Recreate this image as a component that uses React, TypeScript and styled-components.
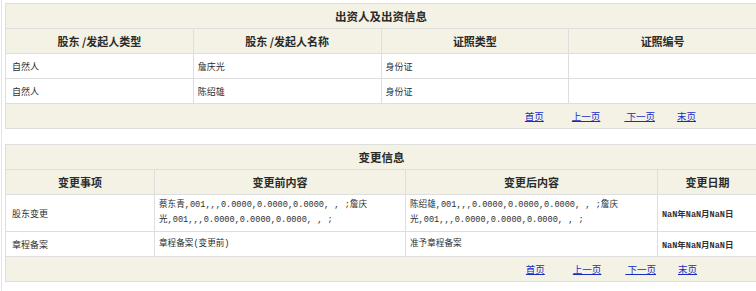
import React from "react";
import styled, { createGlobalStyle } from "styled-components";

const GlobalStyle = createGlobalStyle`
  html, body {
    margin: 0;
    padding: 0;
    overflow: hidden;
    background: #ffffff;
  }
`;

const CJK = `"Noto Sans CJK SC", "Noto Sans", sans-serif`;

const partners = [
  { type: "自然人", name: "詹庆光", cert: "身份证", no: "" },
  { type: "自然人", name: "陈绍雄", cert: "身份证", no: "" },
];

const changes = [
  {
    item: "股东变更",
    before: ["蔡东青,001,,,0.0000,0.0000,0.0000, , ;詹庆", "光,001,,,0.0000,0.0000,0.0000, , ;"],
    after: ["陈绍雄,001,,,0.0000,0.0000,0.0000, , ;詹庆", "光,001,,,0.0000,0.0000,0.0000, , ;"],
    date: "NaN年NaN月NaN日",
  },
  {
    item: "章程备案",
    before: ["章程备案(变更前)"],
    after: ["准予章程备案"],
    date: "NaN年NaN月NaN日",
  },
];

const App = () => {
  return (
    <>
      <GlobalStyle />
      <Frame>
        <Table>
          <colgroup>
            <col style={{ width: "25%" }} />
            <col style={{ width: "25%" }} />
            <col style={{ width: "25%" }} />
            <col style={{ width: "25%" }} />
          </colgroup>
          <tbody>
            <tr>
              <Title colSpan={4}>出资人及出资信息</Title>
            </tr>
            <tr>
              <Head>股东 /发起人类型</Head>
              <Head>股东 /发起人名称</Head>
              <Head>证照类型</Head>
              <Head>证照编号</Head>
            </tr>
            {partners.map((p, i) => (
              <tr key={i}>
                <Cell>{p.type}</Cell>
                <Cell>{p.name}</Cell>
                <Cell>{p.cert}</Cell>
                <Cell>{p.no}</Cell>
              </tr>
            ))}
            <tr>
              <PagerCell colSpan={4}>
                <Pager />
              </PagerCell>
            </tr>
          </tbody>
        </Table>

        <Table $top={15}>
          <colgroup>
            <col style={{ width: "149px" }} />
            <col style={{ width: "251px" }} />
            <col style={{ width: "252px" }} />
            <col style={{ width: "100px" }} />
          </colgroup>
          <tbody>
            <tr>
              <Title colSpan={4}>变更信息</Title>
            </tr>
            <tr>
              <Head>变更事项</Head>
              <Head>变更前内容</Head>
              <Head>变更后内容</Head>
              <Head>变更日期</Head>
            </tr>
            {changes.map((c, i) => (
              <tr key={i}>
                <Cell>{c.item}</Cell>
                <Cell $mono $tall={c.before.length > 1}>
                  {c.before.map((l, j) => (
                    <React.Fragment key={j}>
                      {j > 0 && <br />}
                      {l}
                    </React.Fragment>
                  ))}
                </Cell>
                <Cell $mono $tall={c.after.length > 1}>
                  {c.after.map((l, j) => (
                    <React.Fragment key={j}>
                      {j > 0 && <br />}
                      {l}
                    </React.Fragment>
                  ))}
                </Cell>
                <DateCell>{c.date}</DateCell>
              </tr>
            ))}
            <tr>
              <PagerCell colSpan={4}>
                <Pager />
              </PagerCell>
            </tr>
          </tbody>
        </Table>
      </Frame>
    </>
  );
};

export default App;

const Pager = () => (
  <PagerRow>
    <PageLink href="#">首页</PageLink>
    <PageLink href="#" $gap={28}>
      上一页
    </PageLink>
    <PageLink href="#" $gap={24}>
      &nbsp;下一页
    </PageLink>
    <PageLink href="#" $gap={22}>
      末页
    </PageLink>
  </PagerRow>
);

const Frame = styled.div`
  margin-left: 1px;
  padding: 3px 0 20px 3px;
  border-left: 1px solid #e4e4e4;
  min-height: 260px;
`;

const Table = styled.table<{ $top?: number }>`
  width: 752px;
  margin-top: ${(p) => p.$top || 0}px;
  border-collapse: collapse;
  table-layout: fixed;
  border: 1px solid #dcdcdc;
  font-family: ${CJK};

  td {
    border: 1px solid #dedede;
    box-sizing: border-box;
  }
`;

const Title = styled.td`
  height: 25px;
  padding: 0;
  background: #f3f2e4;
  text-align: center;
  font-size: 11.5px;
  font-weight: bold;
  color: #2a2a2a;
`;

const Head = styled.td`
  height: 25px;
  padding: 0;
  background: #f3f2e4;
  text-align: center;
  font-size: 11px;
  font-weight: bold;
  color: #2a2a2a;
`;

const Cell = styled.td<{ $mono?: boolean; $tall?: boolean }>`
  height: ${(p) => (p.$tall ? 37 : 25)}px;
  padding: 0 4px;
  background: #ffffff;
  font-size: ${(p) => (p.$mono ? 8.6 : 9)}px;
  line-height: 15px;
  color: #2e2e2e;
  font-family: ${(p) =>
    p.$mono ? `"Liberation Mono", "Noto Sans CJK SC", monospace` : CJK};
  vertical-align: middle;

  &:first-child {
    padding-left: 6px;
  }
`;

const DateCell = styled.td`
  height: 25px;
  padding: 0 4px;
  background: #ffffff;
  font-family: "Liberation Mono", "Noto Sans CJK SC", monospace;
  font-size: 8.5px;
  font-weight: bold;
  color: #333333;
  vertical-align: middle;
`;

const PagerCell = styled.td`
  height: 25px;
  padding: 0 60px 0 0;
  background: #f3f2e4;
`;

const PagerRow = styled.div`
  display: flex;
  justify-content: flex-end;
  align-items: center;
`;

const PageLink = styled.a<{ $gap?: number }>`
  margin-left: ${(p) => p.$gap || 0}px;
  font-size: 9.5px;
  color: #1a2bc4;
  text-decoration: underline;
  white-space: pre;
`;
